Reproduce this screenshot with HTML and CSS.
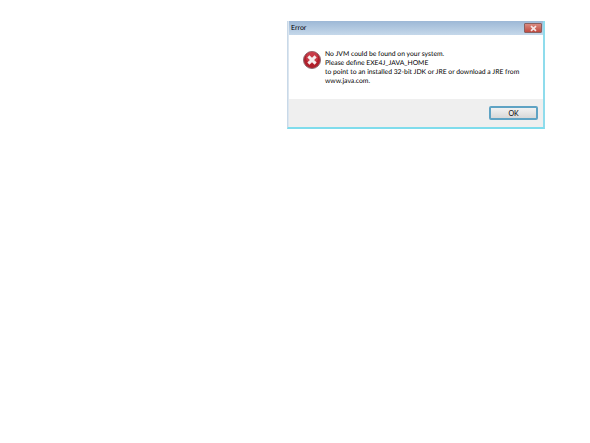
FILE: index.html
```html
<!DOCTYPE html>
<html>
<head>
  <meta name="viewport" content="width=device-width, initial-scale=1">
  <link rel="stylesheet" href="styles.css">
</head>
<body>

<div class="dialog">
  <div class="title-bar">
    <span class="title">Error</span>
    <span class="close-btn">
      <svg width="9" height="7" viewBox="0 0 9 7">
        <path d="M2 1.2 L7 5.8 M7 1.2 L2 5.8" stroke="#f4e6e6" stroke-width="1.7" fill="none"/>
      </svg>
    </span>
  </div>
  <div class="message-area">
    <svg class="error-icon" width="18" height="18" viewBox="0 0 18 18">
      <circle cx="9" cy="9" r="8.5" fill="#b01f2b" stroke="#8e6a72" stroke-width="1"/>
      <circle cx="9" cy="6.5" r="6" fill="#d84f5c" opacity="0.6"/>
      <path d="M5.4 5.4 L12.6 12.6 M12.6 5.4 L5.4 12.6" stroke="#f6eeee" stroke-width="3" fill="none"/>
    </svg>
    <p class="message">No JVM could be found on your system.<br>Please define EXE4J_JAVA_HOME<br>to point to an installed 32-bit JDK or JRE or download a JRE from<br>www.java.com.</p>
  </div>
  <div class="button-area">
    <button class="ok-btn">OK</button>
  </div>
</div>

</body>
</html>
```

FILE: styles.css
```css
body {
  margin: 0;
  background-color: #fff;
  font-family: "Lato", sans-serif;
  text-rendering: geometricPrecision;
}

.dialog {
  width: 258px;
  margin: 21px 0 0 287px;
  background-color: #dce6f0;
  border-left: 1px solid #c9d9e8;
  border-right: 2px solid #8fdcec;
  border-bottom: 2px solid #7fdcec;
  box-sizing: border-box;
  padding-left: 1px;
}

.title-bar {
  height: 14px;
  display: flex;
  align-items: center;
  justify-content: space-between;
  padding: 0 1px 0 2px;
  background: linear-gradient(to bottom, #9db8d6, #c5d8ea);
}

.title {
  font-size: 7px;
  color: #000;
}

.close-btn {
  width: 18px;
  height: 10px;
  box-sizing: border-box;
  display: flex;
  align-items: center;
  justify-content: center;
  background: linear-gradient(to bottom, #da8a80, #c04a40);
  border: 1px solid #8a6060;
  border-radius: 1px;
}

.message-area {
  height: 64px;
  display: flex;
  align-items: flex-start;
  background-color: #fff;
  padding: 15px 0 0 14px;
  box-sizing: border-box;
}

.error-icon {
  margin-top: 1px;
  margin-right: 4px;
  flex-shrink: 0;
}

.message {
  margin: 0;
  font-size: 6.8px;
  line-height: 9px;
  color: #000;
  white-space: nowrap;
}

.button-area {
  height: 28px;
  display: flex;
  align-items: center;
  justify-content: flex-end;
  padding-right: 5px;
  background-color: #efefef;
}

.ok-btn {
  width: 49px;
  height: 14px;
  padding: 0;
  font-family: "Lato", sans-serif;
  font-size: 7px;
  color: #000;
  background: linear-gradient(to bottom, #f2f2f2, #d8d8d8);
  border: 2px solid #5fa3c4;
  border-radius: 2px;
}
```
